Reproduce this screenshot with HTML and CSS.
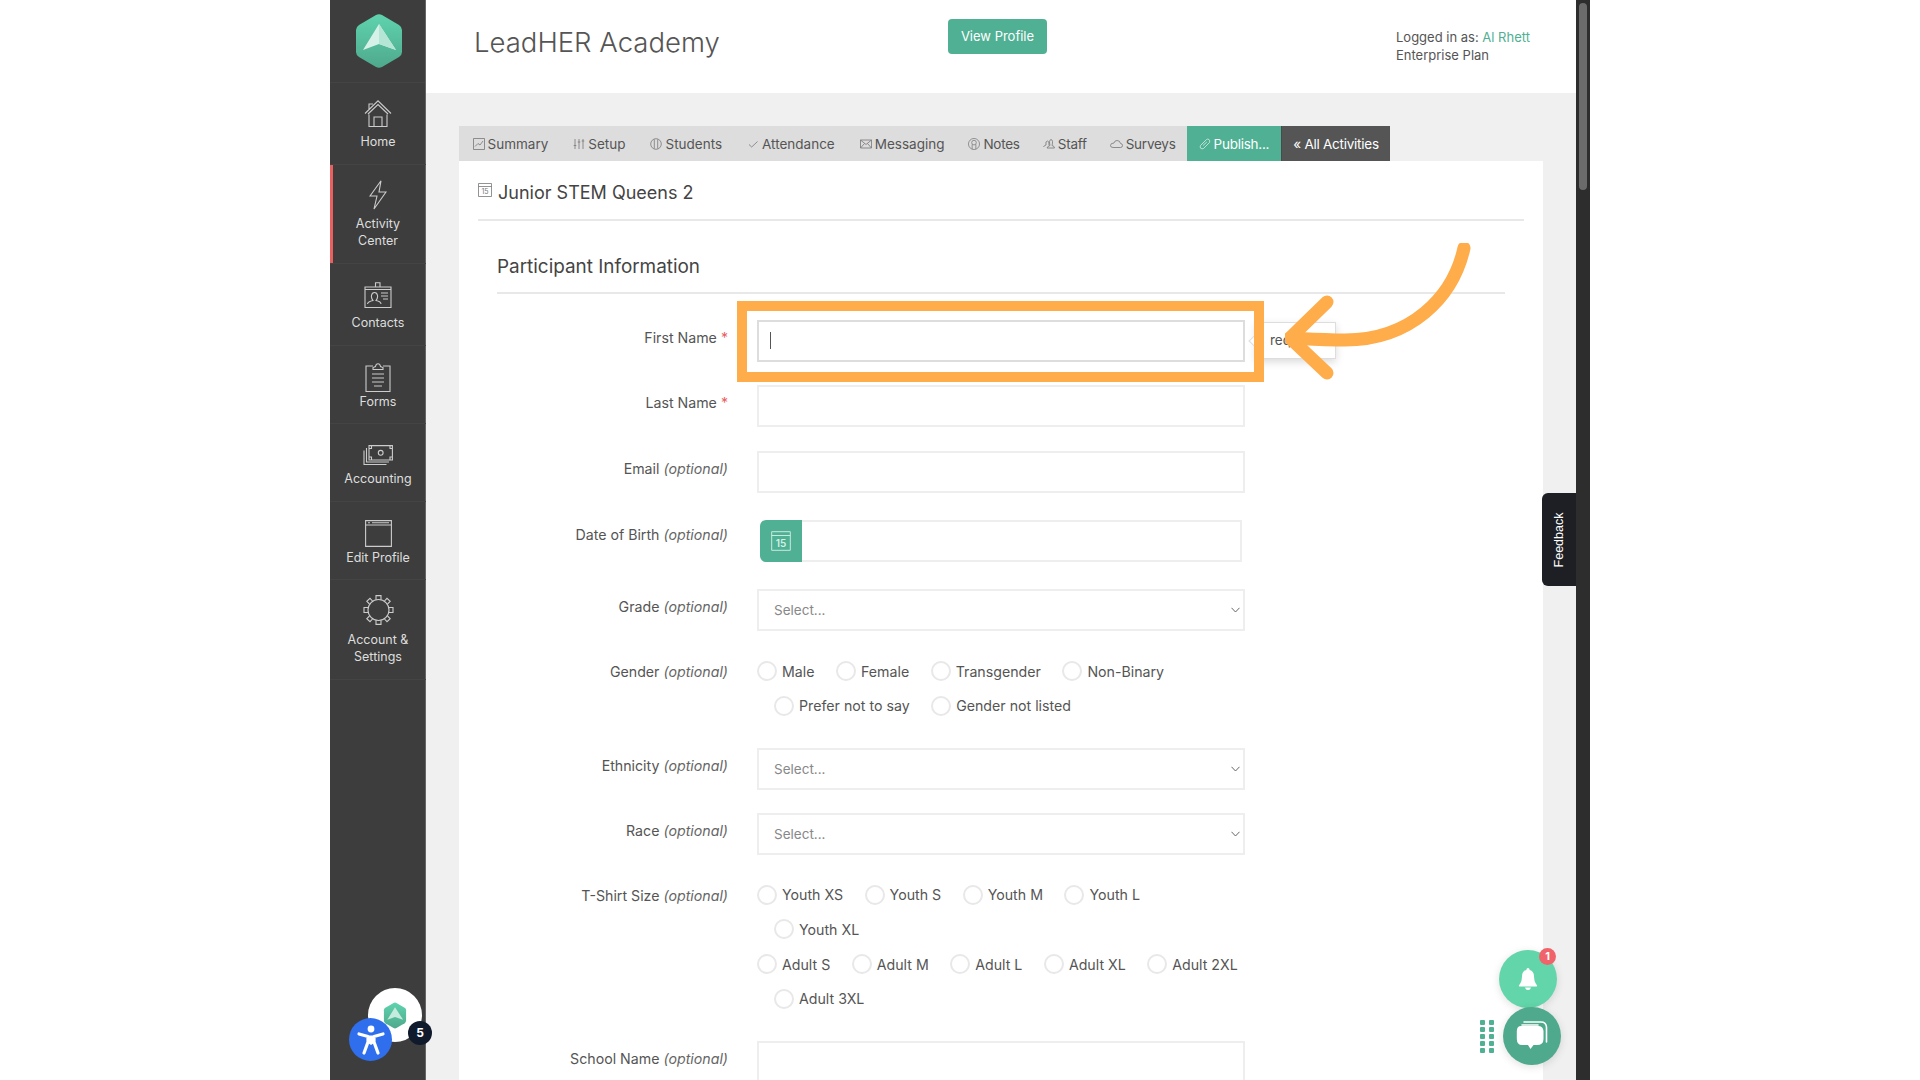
FILE: index.html
```html
<!DOCTYPE html>
<html>
<head>
    <title>LeadHER Academy</title>
    <link rel="stylesheet" href="styles.css">
</head>
<body>
<div class="app">
    <!-- left nav -->
    <div class="sidebar">
        <div class="logo">
            <svg width="48" height="56" viewBox="0 0 48 56">
                <defs>
                    <linearGradient id="hexfill" x1="0" y1="0" x2="0" y2="1">
                        <stop offset="0" stop-color="#5fd3ae"/>
                        <stop offset="1" stop-color="#4fa98c"/>
                    </linearGradient>
                </defs>
                <path d="M21 2 Q24 0.5 27 2 L44 12 Q47 14 47 17 V39 Q47 42 44 44 L27 54 Q24 55.500 21 54 L4 44 Q1 42 1 39 V17 Q1 14 4 12 Z" fill="url(#hexfill)"/>
                <path d="M24 11 L41 37 L24 31 L8 37 Z" fill="#d6f2e8"/>
                <path d="M24 11 L41 37 L24 31 Z" fill="#b5e6d5"/>
            </svg>
        </div>
        <div class="nav-item nav-home">
            <svg class="nav-icon" width="28" height="27" viewBox="0 0 28 27">
                <path d="M1 13.500 L14 .8 L27 13.500 M4 14 L14 4.500 L24 14 M5 14.500 V26.500 H23 V14.500 M10 26.500 V17 H18 V26.500 M5 9.500 V4 H9"/>
            </svg>
            <span>Home</span>
        </div>
        <div class="nav-item nav-activity active">
            <svg class="nav-icon" width="18" height="30" viewBox="0 0 18 30">
                <path d="M12 .8 L1 16 H8 L5 29 L17 12 H10 Z"/>
            </svg>
            <span>Activity<br>Center</span>
        </div>
        <div class="nav-item nav-contacts">
            <svg class="nav-icon" width="28" height="26" viewBox="0 0 28 26">
                <path d="M1 5 H27 V25.500 H1 Z M1 7.500 H27 M11.500 5 V.8 H16 V5 M3.500 22 Q4 19.500 9 18.500 Q7 16 7.500 13.500 Q8 10.500 10.500 10.500 Q13 10.500 13.500 13.500 Q14 16 12 18.500 Q17 19.500 17 22 M17 11 H24 M17 14 H24 M19 17 H24"/>
            </svg>
            <span>Contacts</span>
        </div>
        <div class="nav-item nav-forms">
            <svg class="nav-icon" width="26" height="29" viewBox="0 0 26 29">
                <path d="M8 3 H1 V28.500 H25 V3 H18 M8 6.500 H18 V4.500 L15.500 3.500 Q15 .8 13 .8 Q11 .8 10.500 3.500 L8 4.500 Z M7 11 H19 M7 15 H19 M7 19 H19 M9 23 H17"/>
            </svg>
            <span>Forms</span>
        </div>
        <div class="nav-item nav-accounting">
            <svg class="nav-icon" width="30" height="20" viewBox="0 0 30 20">
                <path d="M6 .6 H29.400 V15 H6 Z M3.500 3 V17 H26 M1 5.500 V19.500 H23.500 M6 3.500 H8.500 V.6 M29.400 3.500 H27 V.6 M6 12 H8.500 V15 M29.400 12 H27 V15"/>
                <circle cx="17.700" cy="7.800" r="2.400"/>
            </svg>
            <span>Accounting</span>
        </div>
        <div class="nav-item nav-edit">
            <svg class="nav-icon" width="27" height="27" viewBox="0 0 27 27">
                <path d="M.6 .6 H26.400 V26.400 H.6 Z M.6 5 H26.400 M3 2.800 H5 M7 2.800 H24"/>
            </svg>
            <span>Edit Profile</span>
        </div>
        <div class="nav-item nav-settings">
            <svg class="nav-icon" width="31" height="30" viewBox="0 0 31 30">
                <circle cx="15.500" cy="15" r="10.500"/>
                <path d="M13 4.700 V.6 H18 V4.700 M13 25.300 V29.400 H18 V25.300 M5.200 12.500 H1 V17.500 H5.200 M25.800 12.500 H30 V17.500 H25.800 M6.500 9 L3.800 6.300 L7 3.300 L9.500 6 M24.500 9 L27.200 6.300 L24 3.300 L21.500 6 M6.500 21 L3.800 23.700 L7 26.700 L9.500 24 M24.500 21 L27.200 23.700 L24 26.700 L21.500 24"/>
            </svg>
            <span>Account &amp;<br>Settings</span>
        </div>

        <div class="help-bubble">
            <svg width="24" height="27" viewBox="0 0 48 56">
                <path d="M21 2 Q24 0.5 27 2 L44 12 Q47 14 47 17 V39 Q47 42 44 44 L27 54 Q24 55.500 21 54 L4 44 Q1 42 1 39 V17 Q1 14 4 12 Z" fill="url(#hexfill)"/>
                <path d="M24 11 L41 37 L24 31 L8 37 Z" fill="#c4ebdd"/>
            </svg>
        </div>
        <div class="help-count">5</div>
        <div class="access-btn">
            <svg width="30" height="32" viewBox="0 0 30 32">
                <circle cx="15" cy="5" r="3.400" fill="#fff"/>
                <path d="M3 10 L12 12.500 V18 L8 29 M27 10 L18 12.500 V18 L22 29 M12 17 H18 M12 13 H18" fill="none" stroke="#fff" stroke-width="3.200" stroke-linecap="round" stroke-linejoin="round"/>
                <path d="M12 12 H18 V19 L15 21 L12 19 Z" fill="#fff"/>
            </svg>
        </div>
    </div>

    <div class="main">
        <div class="topbar">
            <div class="org-name">LeadHER Academy</div>
            <div class="view-profile">View Profile</div>
            <div class="login-info">Logged in as: <span class="green">Al Rhett</span><br>Enterprise Plan</div>
        </div>

        <div class="content">
            <div class="tabs">
                <div class="tab">
                    <svg width="12" height="12" viewBox="0 0 12 12"><path d="M.5 .5 H11.500 V11.500 H.5 Z M2 8.500 L5 5.500 L7 7 L10 3"/></svg>Summary
                </div>
                <div class="tab">
                    <svg width="12" height="12" viewBox="0 0 12 12"><path d="M2 1 V11 M6 1 V11 M10 1 V11 M.7 7.500 H3.300 M4.700 4 H7.300 M8.700 3 H11.300"/></svg>Setup
                </div>
                <div class="tab">
                    <svg width="12" height="12" viewBox="0 0 12 12"><circle cx="6" cy="6" r="5.300"/><path d="M4.300 1.500 V10.500 M7.700 1.500 V10.500"/></svg>Students
                </div>
                <div class="tab">
                    <svg width="12" height="12" viewBox="0 0 12 12"><path d="M2 6.500 L4.700 9 L10.500 3.500"/></svg>Attendance
                </div>
                <div class="tab">
                    <svg width="12" height="12" viewBox="0 0 12 12"><path d="M.5 2 H11.500 V10 H.5 Z M.5 2 L6 6.500 L11.500 2 M.5 10 L4.500 5.500 M11.500 10 L7.500 5.500"/></svg>Messaging
                </div>
                <div class="tab tight">
                    <svg width="12" height="12" viewBox="0 0 13 13"><circle cx="6.500" cy="6.500" r="6"/><circle cx="6.500" cy="5" r="2.500"/><path d="M4.500 7 V12 M8.500 7 V12"/></svg>Notes
                </div>
                <div class="tab tight">
                    <svg width="12" height="12" viewBox="0 0 12 12"><path d="M.5 9 Q1 7.500 3 7 Q2.200 3 4.500 3 Q6.500 3 6 7 M4 10 Q4.500 8 7 7.500 Q5.700 2 8 1.500 Q10.500 2 9 7.500 Q11.500 8 11.500 10 Z"/></svg>Staff
                </div>
                <div class="tab tight">
                    <svg width="13" height="12" viewBox="0 0 13 12"><path d="M3 9.500 H10.500 Q12.500 9.500 12.500 7.500 Q12.500 5.500 10.500 5.500 Q10 2.500 7 2.500 Q4.500 2.500 4 5 Q.5 5 .5 7.500 Q.5 9.500 3 9.500 Z"/></svg>Surveys
                </div>
                <div class="tab tight tab-publish">
                    <svg width="12" height="12" viewBox="0 0 12 12"><path d="M1.500 7.500 L7.500 1.500 Q8.500 .7 10 1.500 Q11.300 2.800 10.500 4.500 L4.500 10.500 Q3 11.300 1.700 10.300 Q.7 9 1.500 7.500 Z M4 7.500 L7.800 4"/></svg>Publish...
                </div>
                <div class="tab tight tab-back">&laquo; All Activities</div>
            </div>

            <div class="panel">
                <div class="panel-title">
                    <svg width="14" height="14" viewBox="0 0 14 14">
                        <path d="M.5 .5 H13.500 V13.500 H.5 Z M.5 3.500 H13.500"/>
                        <text x="7" y="11.300" text-anchor="middle" class="cal-num">15</text>
                    </svg>
                    Junior STEM Queens 2
                </div>

                <div class="section">
                    <h3>Participant Information</h3>

                    <div class="row">
                        <div class="field-label">First Name <span class="req">*</span></div>
                        <div class="field">
                            <div class="input focused"><span class="caret"></span></div>
                            <div class="req-tip">required</div>
                            <div class="highlight"></div>
                        </div>
                    </div>
                    <div class="row row-last">
                        <div class="field-label">Last Name <span class="req">*</span></div>
                        <div class="field"><div class="input"></div></div>
                    </div>
                    <div class="row row-tall">
                        <div class="field-label">Email <em>(optional)</em></div>
                        <div class="field"><div class="input"></div></div>
                    </div>
                    <div class="row row-tall row-date">
                        <div class="field-label">Date of Birth <em>(optional)</em></div>
                        <div class="field date-field">
                            <div class="date-btn">
                                <svg width="20" height="20" viewBox="0 0 20 20">
                                    <path d="M.7 .7 H19.300 V19.300 H.7 Z M.7 4.500 H19.300"/>
                                    <text x="10" y="15.500" text-anchor="middle" class="cal-date">15</text>
                                </svg>
                            </div>
                            <div class="input date-input"></div>
                        </div>
                    </div>
                    <div class="row">
                        <div class="field-label">Grade <em>(optional)</em></div>
                        <div class="field">
                            <div class="input select">Select...<svg width="9" height="6" viewBox="0 0 9 6"><path d="M.5 .8 L4.500 5 L8.500 .8"/></svg></div>
                        </div>
                    </div>

                    <div class="row row-radio">
                        <div class="field-label">Gender <em>(optional)</em></div>
                        <div class="field">
                            <div class="radio-line">
                                <div class="radio"><span class="dot"></span>Male</div>
                                <div class="radio"><span class="dot"></span>Female</div>
                                <div class="radio"><span class="dot"></span>Transgender</div>
                                <div class="radio"><span class="dot"></span>Non-Binary</div>
                            </div>
                            <div class="radio-line indent">
                                <div class="radio"><span class="dot"></span>Prefer not to say</div>
                                <div class="radio"><span class="dot"></span>Gender not listed</div>
                            </div>
                        </div>
                    </div>

                    <div class="row">
                        <div class="field-label">Ethnicity <em>(optional)</em></div>
                        <div class="field">
                            <div class="input select">Select...<svg width="9" height="6" viewBox="0 0 9 6"><path d="M.5 .8 L4.500 5 L8.500 .8"/></svg></div>
                        </div>
                    </div>
                    <div class="row">
                        <div class="field-label">Race <em>(optional)</em></div>
                        <div class="field">
                            <div class="input select">Select...<svg width="9" height="6" viewBox="0 0 9 6"><path d="M.5 .8 L4.500 5 L8.500 .8"/></svg></div>
                        </div>
                    </div>

                    <div class="row row-radio">
                        <div class="field-label">T-Shirt Size <em>(optional)</em></div>
                        <div class="field">
                            <div class="radio-line">
                                <div class="radio"><span class="dot"></span>Youth XS</div>
                                <div class="radio"><span class="dot"></span>Youth S</div>
                                <div class="radio"><span class="dot"></span>Youth M</div>
                                <div class="radio"><span class="dot"></span>Youth L</div>
                            </div>
                            <div class="radio-line indent">
                                <div class="radio"><span class="dot"></span>Youth XL</div>
                            </div>
                            <div class="radio-line">
                                <div class="radio"><span class="dot"></span>Adult S</div>
                                <div class="radio"><span class="dot"></span>Adult M</div>
                                <div class="radio"><span class="dot"></span>Adult L</div>
                                <div class="radio"><span class="dot"></span>Adult XL</div>
                                <div class="radio"><span class="dot"></span>Adult 2XL</div>
                            </div>
                            <div class="radio-line indent">
                                <div class="radio"><span class="dot"></span>Adult 3XL</div>
                            </div>
                        </div>
                    </div>

                    <div class="row">
                        <div class="field-label">School Name <em>(optional)</em></div>
                        <div class="field"><div class="input"></div></div>
                    </div>
                </div>
            </div>
        </div>

        <div class="feedback-tab"><span>Feedback</span></div>

        <div class="bell-btn">
            <svg width="20" height="22" viewBox="0 0 20 22">
                <path d="M10 0 Q11.500 0 11.700 2 Q16 3 16 8.500 Q16 13 18 16 Q20 18 18.500 18.500 H1.500 Q0 18 2 16 Q4 13 4 8.500 Q4 3 8.300 2 Q8.500 0 10 0 Z M7 19.500 H13 Q12.500 22 10 22 Q7.500 22 7 19.500 Z" fill="#fff"/>
            </svg>
            <div class="bell-badge">1</div>
        </div>
        <div class="chat-dots">
            <i></i><i></i><i></i><i></i><i></i><i></i><i></i><i></i><i></i><i></i>
        </div>
        <div class="chat-btn">
            <svg width="32" height="30" viewBox="0 0 32 30">
                <path d="M8 1 H25 Q30 1 30.500 6 V21 M6 4 H22" fill="none" stroke="#fff" stroke-width="1.600" stroke-linecap="round"/>
                <path d="M5 5 H22 Q27 5 27.500 10 V18 Q27.500 24 21 24 H17.500 L14.500 28 L12 24 H6 Q1 24 .8 18 V10 Q1 5 5 5 Z" fill="#fff"/>
            </svg>
        </div>
    </div>

    <div class="scrollbar"><div class="thumb"></div></div>
</div>

<!-- hand drawn arrow on top of the form -->
<svg class="arrow" width="200" height="140" viewBox="0 0 200 140">
    <path d="M179 5 C168 55 125 97 60 97 C40 97 25 96 5 95" fill="none" stroke="#ffac4a" stroke-width="13" stroke-linecap="round"/>
    <path d="M42 59 L5 95 L42 130" fill="none" stroke="#ffac4a" stroke-width="13" stroke-linecap="round" stroke-linejoin="round"/>
</svg>
</body>
</html>
```

FILE: styles.css
```css
* {
    box-sizing: border-box;
}
html, body {
    margin: 0;
    height: 1080px;
    overflow: hidden;
    background: #fff;
}
body {
    font-family: Inter, "Open Sans", sans-serif;
    font-size: 14.2px;
    color: #555;
    position: relative;
}
.app {
    display: flex;
    width: 1260px;
    height: 1080px;
    margin-left: 330px;
}

/* sidebar */
.sidebar {
    width: 96px;
    flex: none;
    background: #3d3d3d;
    border-right: 1px solid #666;
    position: relative;
    z-index: 1;
    color: #ddd;
}
.logo {
    height: 83px;
    padding: 13px 0 0 2px;
    text-align: center;
    border-bottom: 1px solid #444;
}
.nav-item {
    display: flex;
    flex-direction: column;
    align-items: center;
    text-align: center;
    font-size: 12.5px;
    line-height: 17px;
    padding-bottom: 14px;
    border-bottom: 1px solid #444;
    margin-right: -1px;
}
.nav-icon {
    fill: none;
    stroke: #ccc;
    stroke-width: 1.1;
    margin-bottom: 5px;
}
.nav-home { padding-top: 17px; }
.nav-home .nav-icon { margin-bottom: 6px; }
.nav-activity { padding-top: 15px; }
.nav-contacts { padding-top: 18px; }
.nav-contacts .nav-icon { margin-bottom: 6px; }
.nav-forms { padding-top: 17px; padding-bottom: 13px; }
.nav-forms .nav-icon { margin-bottom: 1px; }
.nav-accounting { padding-top: 21px; }
.nav-edit { padding-top: 18px; padding-bottom: 13px; }
.nav-edit .nav-icon { margin-bottom: 2px; }
.nav-settings { padding-top: 15px; }
.nav-settings .nav-icon { margin-bottom: 6px; }
.active {
    box-shadow: inset 3px 0 0 #e8605f;
}
.help-bubble {
    position: absolute;
    left: 38px;
    top: 988px;
    width: 54px;
    height: 54px;
    border-radius: 50%;
    background: #fff;
    display: flex;
    align-items: center;
    justify-content: center;
}
.help-count {
    position: absolute;
    left: 78px;
    top: 1021px;
    width: 24px;
    height: 24px;
    border-radius: 50%;
    background: #0f1a2c;
    color: #fff;
    font-size: 12px;
    font-weight: 700;
    line-height: 24px;
    text-align: center;
}
.access-btn {
    position: absolute;
    left: 19px;
    top: 1018px;
    width: 43px;
    height: 43px;
    border-radius: 50%;
    background: #2f6fed;
    display: flex;
    align-items: center;
    justify-content: center;
}

/* main column */
.main {
    width: 1150px;
    flex: none;
    position: relative;
    background: #f0f0f0;
}
.topbar {
    height: 93px;
    background: #fff;
    position: relative;
    padding-left: 48px;
    display: flex;
    align-items: center;
}
.org-name {
    width: 474px;
    font-size: 27.5px;
    font-weight: 300;
    color: #555;
    padding-bottom: 9px;
    white-space: nowrap;
}
.view-profile {
    width: 99px;
    height: 35px;
    margin-bottom: 21px;
    background: #4fb093;
    border-radius: 4px;
    color: #fff;
    line-height: 35px;
    text-align: center;
    font-size: 13px;
}
.login-info {
    margin-left: auto;
    width: 180px;
    margin-bottom: 1px;
    font-size: 13px;
    line-height: 18px;
}
.green {
    color: #4fb093;
}
.content {
    padding: 33px 33px 0;
}

/* tabs */
.tabs {
    display: inline-flex;
    vertical-align: top;
    height: 35px;
    background: #ddd;
    padding-left: 1px;
}
.tab {
    display: flex;
    align-items: center;
    padding: 0 12.5px;
    font-size: 13.5px;
    white-space: nowrap;
}
.tab.tight {
    padding: 0 11.5px;
    letter-spacing: -0.25px;
}
.tab svg {
    fill: none;
    stroke: #777;
    stroke-width: 0.8;
    margin-right: 3px;
}
.tab-publish {
    background: #4fb093;
    color: #fff;
}
.tab-publish svg {
    stroke: #d5efe6;
}
.tab-back {
    background: #555;
    color: #fff;
    border-left: 1px solid #4a4a4a;
}

/* panel */
.panel {
    background: #fff;
    padding: 0 19px;
    height: 920px;
}
.panel-title {
    height: 60px;
    padding-top: 20px;
    border-bottom: 2px solid #e8e8e8;
    font-size: 18px;
    line-height: 24px;
    color: #444;
    white-space: nowrap;
}
.panel-title svg {
    fill: none;
    stroke: #777;
    stroke-width: 0.8;
    margin-right: 1px;
    vertical-align: 2px;
}
.cal-num {
    font-size: 7px;
    fill: #777;
    stroke: none;
}
.section {
    padding: 0 19px;
}
.section h3 {
    margin: 0 0 26px;
    height: 73px;
    padding-top: 33px;
    border-bottom: 2px solid #e8e8e8;
    font-size: 18.9px;
    font-weight: 400;
    line-height: 26px;
    color: #444;
}

/* form rows */
.row {
    display: flex;
    margin-bottom: 23px;
}
.row-last {
    margin-bottom: 24px;
}
.row-tall {
    margin-bottom: 27px;
}
.field-label {
    width: 231px;
    flex: none;
    padding-top: 9px;
    line-height: 18px;
    text-align: right;
    white-space: nowrap;
}
.field-label em {
    color: #666;
}
.req {
    color: #e8605f;
}
.row-date .field-label {
    padding-top: 6px;
}
.field {
    width: 488px;
    margin-left: 29px;
    position: relative;
}
.input {
    height: 42px;
    border: 2px solid #eee;
    background: #fff;
    position: relative;
}
.input.focused {
    border-color: #ddd;
}
.caret {
    position: absolute;
    left: 11px;
    top: 10px;
    width: 1px;
    height: 17px;
    background: #555;
}
.select {
    display: flex;
    align-items: center;
    justify-content: space-between;
    padding: 0 3px 0 15px;
    font-size: 13.5px;
    color: #888;
}
.select svg {
    fill: none;
    stroke: #666;
    stroke-width: 1;
}

/* the tooltip and the orange box sit over the form */
.req-tip {
    position: absolute;
    left: 499px;
    top: 2px;
    width: 80px;
    height: 37px;
    padding-left: 13px;
    line-height: 35px;
    font-size: 13.5px;
    background: #fff;
    border: 1px solid #ddd;
    box-shadow: 0 3px 8px rgba(0,0,0,0.15);
    white-space: nowrap;
}
.req-tip::before {
    content: "";
    position: absolute;
    left: -6px;
    top: 12px;
    width: 11px;
    height: 11px;
    background: #fff;
    border-left: 1px solid #ddd;
    border-bottom: 1px solid #ddd;
    transform: rotate(45deg);
}
.highlight {
    position: absolute;
    left: -20px;
    top: -19px;
    width: 527px;
    height: 81px;
    border: 10px solid #ffac4a;
}

/* date of birth */
.date-field {
    display: flex;
    padding: 0 3px;
    height: 42px;
}
.date-btn {
    width: 42px;
    flex: none;
    background: #4fb093;
    border-radius: 6px 0 0 6px;
    display: flex;
    align-items: center;
    justify-content: center;
}
.date-btn svg {
    fill: none;
    stroke: #c9ebdf;
    stroke-width: 1;
}
.cal-date {
    font-size: 10px;
    font-weight: 600;
    fill: #d5efe6;
    stroke: none;
}
.date-input {
    flex: 1;
    border-left: none;
}

/* radios */
.row-radio {
    margin-bottom: 17px;
}
.row-radio .field {
    padding-top: 7px;
}
.radio-line {
    display: flex;
    height: 34.8px;
}
.indent {
    padding-left: 17px;
}
.radio {
    display: flex;
    height: 20px;
    align-items: center;
    margin-right: 21.5px;
    white-space: nowrap;
}
.dot {
    width: 20px;
    height: 20px;
    border: 2px solid #e8e8e8;
    border-radius: 50%;
    margin-right: 5px;
    background: #fff;
}

/* floating things on the right */
.feedback-tab {
    position: absolute;
    left: 1116px;
    top: 493px;
    width: 34px;
    height: 93px;
    background: #1e1f24;
    border-radius: 6px 0 0 6px;
    color: #fff;
    font-family: "Liberation Sans", Arial, sans-serif;
    font-size: 12.5px;
    display: flex;
    align-items: center;
    justify-content: center;
}
.feedback-tab span {
    transform: rotate(-90deg);
}
.bell-btn {
    position: absolute;
    left: 1073px;
    top: 950px;
    width: 58px;
    height: 58px;
    border-radius: 50%;
    background: #62d5aa;
    box-shadow: 0 2px 8px rgba(0,0,0,0.12);
    display: flex;
    align-items: center;
    justify-content: center;
}
.bell-badge {
    position: absolute;
    left: 40px;
    top: -2px;
    width: 17px;
    height: 17px;
    border-radius: 50%;
    background: #f0636a;
    color: #fff;
    font-size: 11px;
    font-weight: 700;
    line-height: 17px;
    text-align: center;
}
.chat-btn {
    position: absolute;
    left: 1077px;
    top: 1007px;
    width: 58px;
    height: 58px;
    border-radius: 50%;
    background: #4fa98c;
    box-shadow: 0 2px 8px rgba(0,0,0,0.12);
    display: flex;
    align-items: center;
    justify-content: center;
}
.chat-dots {
    position: absolute;
    left: 1054px;
    top: 1020px;
    display: grid;
    grid-template-columns: 5px 5px;
    column-gap: 4px;
    row-gap: 2px;
}
.chat-dots i {
    height: 5px;
    border-radius: 1px;
    background: #4fb093;
}

/* fake scrollbar */
.scrollbar {
    width: 14px;
    flex: none;
    background: #2d2d2d;
    padding: 3px 3px 0 3px;
}
.thumb {
    height: 187px;
    border-radius: 4px;
    background: #6b6b6b;
}

.arrow {
    position: absolute;
    left: 1285px;
    top: 243px;
}
```
